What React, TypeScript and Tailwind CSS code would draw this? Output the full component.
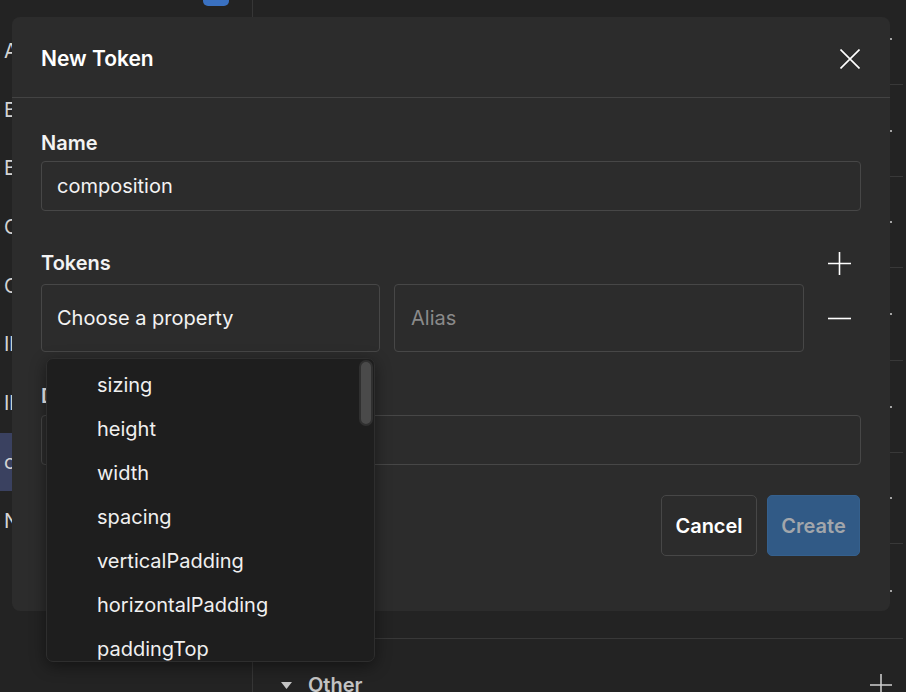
import React from "react";

const sidebarItems = [
  "ALL",
  "Animation",
  "Border",
  "Breakpoints",
  "Color",
  "Components",
  "Illustrations",
  "Illustration sets",
  "composition",
  "Navigation",
];

const mainRows = [
  { name: "Sizing", h: "h-[92px]" },
  { name: "Spacing", h: "h-[92px]" },
  { name: "Color", h: "h-[91px]" },
  { name: "Border radius", h: "h-[93px]" },
  { name: "Border width", h: "h-[92px]" },
  { name: "Opacity", h: "h-[91px]" },
  { name: "Typography", h: "h-[95px]" },
];

const options = [
  "sizing",
  "height",
  "width",
  "spacing",
  "verticalPadding",
  "horizontalPadding",
  "paddingTop",
  "paddingRight",
  "paddingBottom",
  "paddingLeft",
];

function PlusIcon({ className }: { className?: string }) {
  return (
    <svg viewBox="0 0 23 23" className={className} fill="none" stroke="currentColor" strokeWidth={1.6}>
      <path d="M11.5 0v23M0 11.5h23" />
    </svg>
  );
}

function MinusIcon({ className }: { className?: string }) {
  return (
    <svg viewBox="0 0 23 23" className={className} fill="none" stroke="currentColor" strokeWidth={1.6}>
      <path d="M0 11.5h23" />
    </svg>
  );
}

function CloseIcon({ className }: { className?: string }) {
  return (
    <svg viewBox="0 0 20 20" className={className} fill="none" stroke="currentColor" strokeWidth={1.6}>
      <path d="M0.5 0.5l19 19M19.5 0.5l-19 19" />
    </svg>
  );
}

export default function App() {
  return (
    <div className="relative w-[906px] h-[692px] overflow-hidden bg-[#232323] font-['Inter',_'Noto_Sans',sans-serif] text-[20px]">
      {/* background app */}
      <div className="flex h-full">
        <aside className="w-[253px] shrink-0 border-r border-[#363636]">
          <div className="-mt-[37px]">
            {sidebarItems.map((s, i) => (
              <div
                key={s}
                className={
                  i === 8
                    ? "flex h-[58.7px] items-center justify-between pl-[4px] pr-[23px] bg-[#3a4160] text-[#d4d4d4]"
                    : "flex h-[58.7px] items-center justify-between pl-[4px] pr-[23px] text-[#d4d4d4]"
                }
              >
                <span>{s}</span>
                {i === 0 && (
                  <span className="flex h-[28px] w-[26px] items-center justify-center rounded-[5px] bg-[#3a71c1] text-[14px] text-white">
                    12
                  </span>
                )}
              </div>
            ))}
          </div>
        </aside>
        <main className="flex-1 mr-[3px]">
          <div className="-mt-[7px]">
            {mainRows.map((r) => (
              <div
                key={r.name}
                className={`${r.h} flex items-center justify-between border-b border-[#383838] pl-[28px] pr-[11px]`}
              >
                <div className="flex items-center gap-[16px] font-semibold text-[#c4c4c4]">
                  <svg viewBox="0 0 11 7" className="w-[11px] h-[7px]" fill="currentColor">
                    <path d="M0 0h11L5.5 7z" />
                  </svg>
                  {r.name}
                </div>
                <PlusIcon className="w-[22px] h-[22px] text-[#cfcfcf]" />
              </div>
            ))}
            <div className="flex h-[92px] items-center justify-between pl-[28px] pr-[11px]">
              <div className="flex items-center gap-[16px] font-semibold text-[#c4c4c4]">
                <svg viewBox="0 0 11 7" className="w-[11px] h-[7px]" fill="currentColor">
                  <path d="M0 0h11L5.5 7z" />
                </svg>
                Other
              </div>
              <PlusIcon className="w-[22px] h-[22px] text-[#cfcfcf]" />
            </div>
          </div>
        </main>
      </div>

      {/* modal */}
      <div className="absolute left-[12px] top-[17px] w-[878px] h-[594px] rounded-[8px] bg-[#2c2c2c]">
        <div className="flex h-[81px] items-center justify-between border-b border-[#434343] pl-[29px] pr-[30px] pt-[3px]">
          <h2 className="text-[21px] font-semibold text-white">New Token</h2>
          <CloseIcon className="w-[20px] h-[20px] text-white" />
        </div>
        <div className="px-[29px] pt-[33px]">
          <div className="leading-[24px] font-semibold text-[#f3f3f3]">Name</div>
          <div className="mt-[6px] flex h-[50px] items-center rounded-[4px] border border-[#474747] px-[15px] text-[#f3f3f3]">
            composition
          </div>

          <div className="mt-[40px] flex h-[24px] items-center justify-between">
            <div className="leading-[24px] font-semibold text-[#f3f3f3]">Tokens</div>
            <PlusIcon className="mr-[10px] w-[23px] h-[23px] text-white" />
          </div>

          <div className="mt-[9px] flex h-[68px]">
            <div className="flex flex-1 gap-[14px]">
              <div className="relative w-[339px] shrink-0">
                <div className="flex h-full items-center rounded-[4px] border border-[#474747] px-[15px] text-[#f3f3f3]">
                  Choose a property
                </div>
                <div className="absolute left-[5px] top-[74px] z-10 w-[329px] h-[304px] overflow-hidden rounded-[7px] border border-[#2e2e2e] bg-[#1e1e1e] shadow-[0_4px_16px_rgba(0,0,0,0.45)]">
                  <div className="pt-[4px]">
                    {options.map((o) => (
                      <div key={o} className="flex h-[44px] items-center pl-[50px] text-[#f0f0f0]">
                        {o}
                      </div>
                    ))}
                  </div>
                  <div className="absolute right-[1px] top-[1px] w-[14px] h-[66px] rounded-full border-[2px] border-[#303030] bg-[#4a4a4a]" />
                </div>
              </div>
              <div className="flex flex-1 items-center rounded-[4px] border border-[#474747] px-[16px] text-[#8a8a8a]">
                Alias
              </div>
            </div>
            <div className="flex w-[57px] shrink-0 items-center justify-end pr-[10px]">
              <MinusIcon className="w-[23px] h-[23px] text-white" />
            </div>
          </div>

          <div className="mt-[32px] leading-[24px] font-semibold text-[#f3f3f3]">Description</div>
          <div className="mt-[7px] flex h-[50px] items-center rounded-[4px] border border-[#474747] px-[15px]" />

          <div className="mt-[30px] mr-[1px] flex h-[61px] justify-end gap-[10px]">
            <button className="w-[96px] rounded-[5px] border border-[#474747] font-semibold text-white">
              Cancel
            </button>
            <button className="w-[93px] rounded-[5px] border border-[#35608d] bg-[#315a86] font-semibold text-[#a2a6ab]">
              Create
            </button>
          </div>
        </div>
      </div>
    </div>
  );
}
